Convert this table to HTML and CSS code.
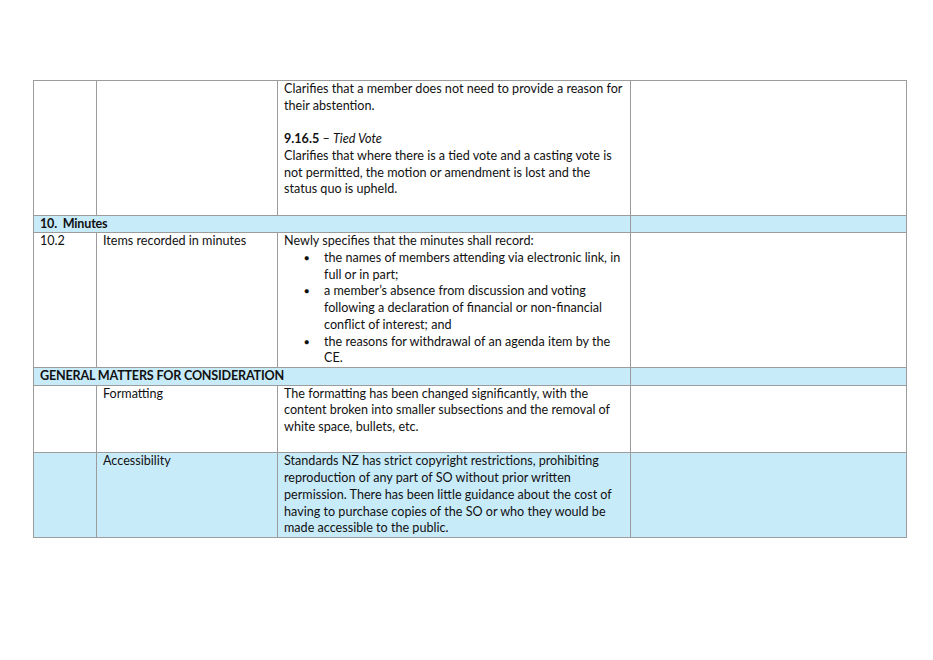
FILE: index.html
```html
<!DOCTYPE html>
<html>
<head>
<meta charset="utf-8">
<link rel="stylesheet" href="styles.css">
</head>
<body>
<table class="sheet">
  <colgroup>
    <col class="c1"><col class="c2"><col class="c3"><col class="c4">
  </colgroup>
  <tr>
    <td></td>
    <td></td>
    <td>
      <p>Clarifies that a member does not need to provide a reason for their abstention.</p>
      <p>&nbsp;</p>
      <p><b>9.16.5</b> – <i>Tied Vote</i></p>
      <p>Clarifies that where there is a tied vote and a casting vote is not permitted, the motion or amendment is lost and the status quo is upheld.</p>
      <p>&nbsp;</p>
    </td>
    <td></td>
  </tr>
  <tr class="head">
    <td colspan="3"><b>10.&nbsp; Minutes</b></td>
    <td></td>
  </tr>
  <tr>
    <td>10.2</td>
    <td>Items recorded in minutes</td>
    <td>
      <p>Newly specifies that the minutes shall record:</p>
      <ul class="bullets">
        <li>the names of members attending via electronic link, in full or in part;</li>
        <li>a member’s absence from discussion and voting following a declaration of financial or non-financial conflict of interest; and</li>
        <li>the reasons for withdrawal of an agenda item by the CE.</li>
      </ul>
    </td>
    <td></td>
  </tr>
  <tr class="head">
    <td colspan="3"><b>GENERAL MATTERS FOR CONSIDERATION</b></td>
    <td></td>
  </tr>
  <tr>
    <td></td>
    <td>Formatting</td>
    <td>
      <p>The formatting has been changed significantly, with the content broken into smaller subsections and the removal of white space, bullets, etc.</p>
      <p>&nbsp;</p>
    </td>
    <td></td>
  </tr>
  <tr class="blue">
    <td></td>
    <td>Accessibility</td>
    <td>
      <p>Standards NZ has strict copyright restrictions, prohibiting reproduction of any part of SO without prior written permission. There has been little guidance about the cost of having to purchase copies of the SO or who they would be made accessible to the public.</p>
    </td>
    <td></td>
  </tr>
</table>
</body>
</html>
```

FILE: styles.css
```css
html, body {
  margin: 0;
  padding: 0;
  background: #ffffff;
}

body {
  font-family: "Lato", "Liberation Sans", sans-serif;
  font-size: 12.6px;
  line-height: 16.7px;
  color: #111111;
}

.sheet {
  margin: 80px 0 0 33px;
  width: 873px;
  border-collapse: collapse;
  table-layout: fixed;
  border: 1px solid #8c8c8c;
}

.c1 { width: 63px; }
.c2 { width: 181px; }
.c3 { width: 353px; }
.c4 { width: 276px; }

.sheet td {
  border: 1px solid #9c9c9c;
  padding: 0 6px;
  vertical-align: top;
}

.sheet p {
  margin: 0;
}

.sheet b {
  font-weight: 700;
}

.head b {
  letter-spacing: -0.2px;
}

.bullets {
  margin: 0;
  padding: 0 0 0 20px;
  list-style: none;
}

.bullets li {
  display: flex;
}

.bullets li::before {
  content: "\25CF";
  flex: 0 0 20px;
  font-size: 8.5px;
  line-height: 16.7px;
}

.head td,
.blue td {
  background: #c8ebfa;
}
```
